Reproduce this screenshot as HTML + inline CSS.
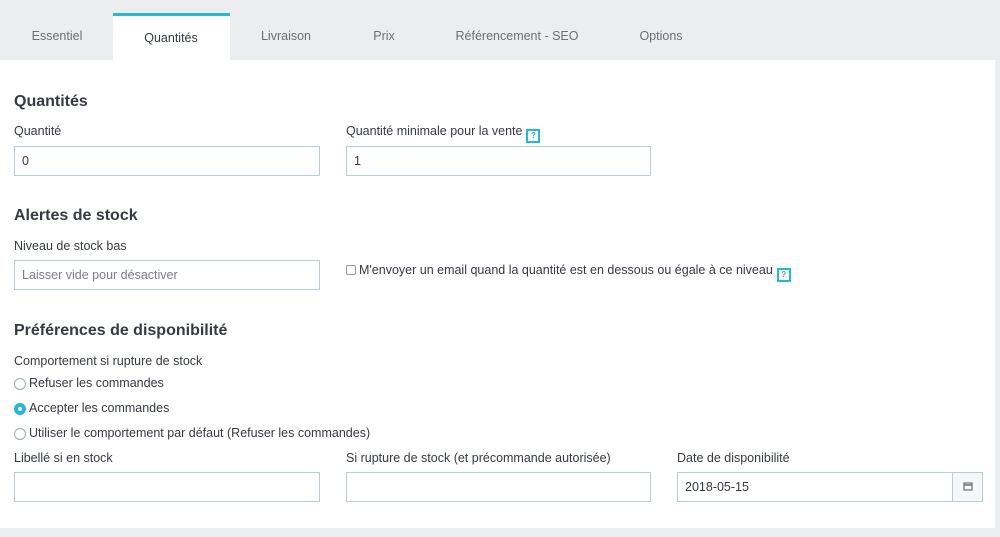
<!DOCTYPE html>
<html><head><meta charset="utf-8"><style>
*{box-sizing:border-box;margin:0;padding:0}
body{width:1000px;height:537px;background:#ebedef;font-family:"Liberation Sans",sans-serif;color:#363a41;position:relative;overflow:hidden;font-size:12.5px}
.a{position:absolute;white-space:nowrap}
.tab{position:absolute;top:29px;font-size:12.5px;color:#6c6f75;transform:translateX(-50%)}
.act{position:absolute;left:113px;top:13px;width:117px;height:48px;background:#fff;border-top:3px solid #25b9d7}
.panel{position:absolute;left:0;top:60px;width:995px;height:468px;background:#fff}
h2{position:absolute;font-size:16px;font-weight:bold;color:#363a41;white-space:nowrap}
.in{position:absolute;height:30px;border:1px solid #bbcdd2;background:#fff;font-size:12.5px;padding:7px 7px;color:#363a41}
.q{display:inline-block;width:14px;height:14px;border:2px solid #25b9d7;background:#fff;color:#25b9d7;font-size:8px;font-weight:bold;text-align:center;line-height:10px;vertical-align:-3px;margin-left:4px}
.r{position:absolute;width:12px;height:12px;border:1px solid #9aa;border-radius:50%;background:#fff}
</style></head><body>
<div class="act"></div>
<div class="tab" style="left:57px">Essentiel</div>
<div class="tab" style="left:171px;top:31px;color:#363a41">Quantités</div>
<div class="tab" style="left:286px">Livraison</div>
<div class="tab" style="left:384px">Prix</div>
<div class="tab" style="left:517px">Référencement - SEO</div>
<div class="tab" style="left:661px">Options</div>
<div class="panel"></div>
<h2 style="left:14px;top:93px">Quantités</h2>
<div class="a" style="left:14px;top:124px">Quantité</div>
<div class="a" style="left:346px;top:124px">Quantité minimale pour la vente<span class="q">?</span></div>
<div class="in" style="left:14px;top:146px;width:306px">0</div>
<div class="in" style="left:346px;top:146px;width:305px">1</div>
<h2 style="left:14px;top:207px">Alertes de stock</h2>
<div class="a" style="left:14px;top:239px">Niveau de stock bas</div>
<div class="in" style="left:14px;top:260px;width:306px;color:#7a7e84">Laisser vide pour désactiver</div>
<div class="a" style="left:346px;top:263px"><span style="display:inline-block;width:10px;height:10px;border:1px solid #999;border-radius:2px;vertical-align:-1px;margin-right:3px"></span>M'envoyer un email quand la quantité est en dessous ou égale à ce niveau<span class="q">?</span></div>
<h2 style="left:14px;top:322px">Préférences de disponibilité</h2>
<div class="a" style="left:14px;top:354px">Comportement si rupture de stock</div>
<div class="r" style="left:14px;top:378px"></div><div class="a" style="left:29px;top:376px">Refuser les commandes</div>
<div class="r" style="left:14px;top:403px;background:#25b9d7;border-color:#25b9d7"><div style="width:4px;height:4px;background:#fff;border-radius:50%;margin:3px"></div></div><div class="a" style="left:29px;top:401px">Accepter les commandes</div>
<div class="r" style="left:14px;top:428px"></div><div class="a" style="left:29px;top:426px">Utiliser le comportement par défaut (Refuser les commandes)</div>
<div class="a" style="left:14px;top:451px">Libellé si en stock</div>
<div class="a" style="left:346px;top:451px">Si rupture de stock (et précommande autorisée)</div>
<div class="a" style="left:677px;top:451px">Date de disponibilité</div>
<div class="in" style="left:14px;top:472px;width:306px"></div>
<div class="in" style="left:346px;top:472px;width:305px"></div>
<div class="in" style="left:677px;top:472px;width:306px">2018-05-15</div>
<div class="a" style="left:952px;top:473px;width:30px;height:28px;background:#f5f8f9;border-left:1px solid #bbcdd2"><svg width="30" height="28" viewBox="0 0 30 28"><rect x="11" y="10" width="8" height="7" fill="none" stroke="#6c6f75" stroke-width="1.2"/><line x1="11" y1="12" x2="19" y2="12" stroke="#6c6f75" stroke-width="1.5"/></svg></div>
</body></html>
